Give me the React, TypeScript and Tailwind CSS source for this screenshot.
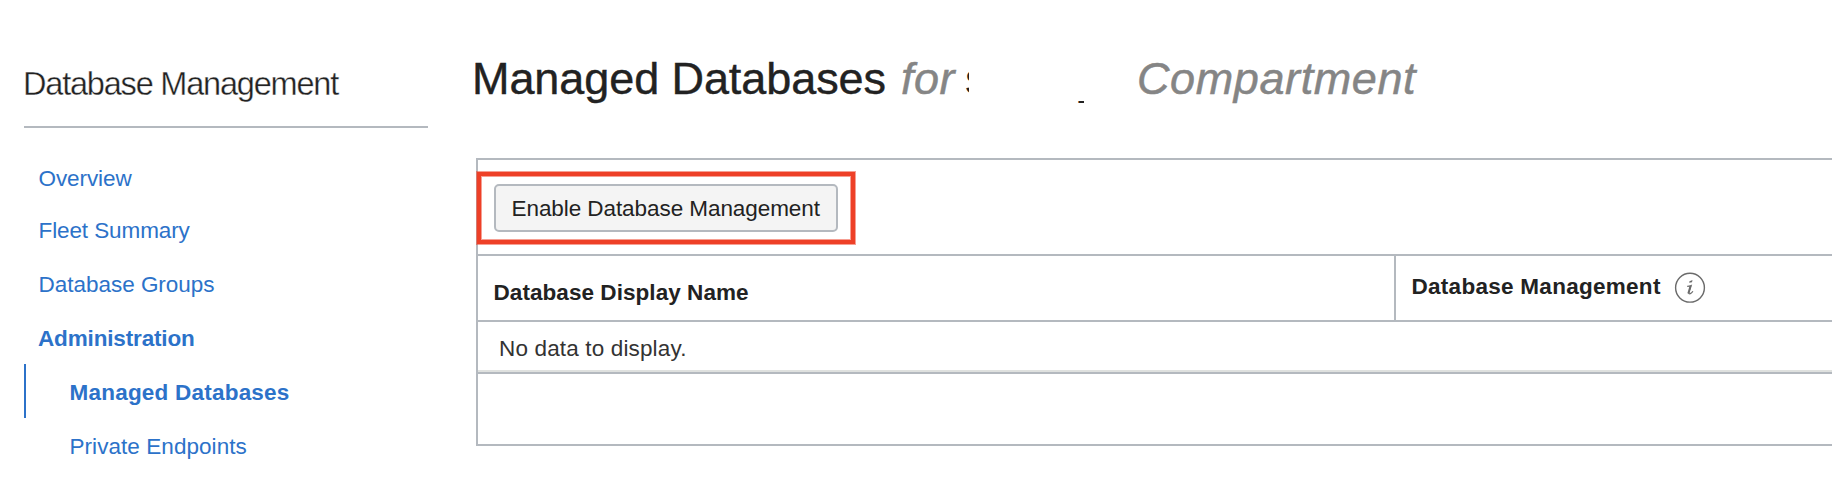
import React from "react";

type NavItem = { label: string; className: string };

const navItems: NavItem[] = [
  { label: "Overview", className: "h-[52px] pl-[14.5px] tracking-[-0.08px]" },
  { label: "Fleet Summary", className: "h-[54px] pl-[14.5px] tracking-[-0.1px]" },
  { label: "Database Groups", className: "h-[54px] pl-[14.5px] tracking-[-0.02px]" },
  { label: "Administration", className: "h-[54px] pl-[14px] font-bold tracking-[-0.15px]" },
  {
    label: "Managed Databases",
    className: "h-[54px] border-l-2 border-[#2c72c9] pl-[43.5px] font-bold tracking-[0.22px]",
  },
  { label: "Private Endpoints", className: "h-[54px] pl-[45.5px] tracking-[0.06px]" },
];

function InfoIcon() {
  return (
    <svg className="ml-[14px] mt-[16px] h-8 w-8 shrink-0" viewBox="0 0 32 32" fill="none">
      <circle cx="16" cy="15.7" r="14.4" stroke="#6b6b6b" strokeWidth="1.4" />
      <path d="M15.5 9.2L18.5 8.1L18 10.3L15.2 10.8Z" fill="#6b6b6b" />
      <path
        d="M13.2 14.3C14.6 14.3 16 14 17.2 13.5L14.9 20.6C14.6 22 15.5 22.1 16.4 21.6C17.6 21 18.3 20.2 18.9 19.2"
        stroke="#6b6b6b"
        strokeWidth="1.2"
      />
      <path d="M16.5 13.9L14.3 21.4" stroke="#6b6b6b" strokeWidth="1.9" />
    </svg>
  );
}

function Sidebar() {
  return (
    <aside className="w-[404px] shrink-0">
      <h2 className="-ml-px h-[126px] whitespace-nowrap pt-[61px] text-[32.5px] leading-[46px] tracking-[-1.2px] text-[#222] [-webkit-text-stroke:0.35px_white]">
        Database Management
      </h2>
      <div className="h-[2px] bg-[#b4b9bf]" />
      <nav className="pt-[22px] text-[22.5px] leading-[57px] text-[#2c72c9]">
        {navItems.map((item) => (
          <a key={item.label} className={`block whitespace-nowrap ${item.className}`}>
            {item.label}
          </a>
        ))}
      </nav>
    </aside>
  );
}

function Heading() {
  return (
    <h1 className="-ml-[4px] flex h-[158px] whitespace-nowrap pt-[50px] text-[45px] leading-[58px] text-[#222]">
      <span className="w-[429px] tracking-[-0.08px] [-webkit-text-stroke:0.4px_#222]">Managed Databases</span>
      <em className="w-[64px] tracking-[0.5px] text-[#858585] [-webkit-text-stroke:0.5px_#858585]">for</em>
      <span className="h-[58px] w-[4px] overflow-hidden">s</span>
      <span className="ml-[108px] mt-[51px] flex h-[2px] w-[7px] items-end overflow-hidden">
        <span className="-mb-[6px]">y</span>
      </span>
      <em className="ml-[53px] tracking-[0.6px] text-[#858585] [-webkit-text-stroke:0.5px_#858585]">Compartment</em>
    </h1>
  );
}

function DatabaseTable() {
  return (
    <section className="h-[288px] border-y-2 border-l-2 border-[#b4b9bf] text-[22.5px] text-[#222]">
      <div className="flex h-[96px] items-start border-b-2 border-[#b4b9bf] pt-[12px]">
        <div className="-ml-px h-[72px] w-[378px] border-4 border-[#ee4027] pl-[13px] pt-[8px] shadow-[0_0_0_1px_#ee402780,inset_0_0_0_1px_#ee402780]">
          <button className="h-[48px] w-[344px] whitespace-nowrap rounded-[5px] border-2 border-[#b4b9bf] bg-[#f4f4f4] pl-[15.5px] text-left leading-[46px] tracking-[-0.07px]">
            Enable Database Management
          </button>
        </div>
      </div>
      <div className="flex h-[66px] border-b-2 border-[#b4b9bf] font-bold">
        <div className="w-[918px] border-r-2 border-[#b4b9bf] pl-[15.5px] leading-[73px] tracking-[0.06px]">
          Database Display Name
        </div>
        <div className="flex pl-[15px] leading-[61px] tracking-[0.28px]">
          <span className="w-[249px] whitespace-nowrap pl-[0.5px]">Database Management</span>
          <InfoIcon />
        </div>
      </div>
      <div className="h-[50px] border-b-2 border-[#dfe1df] pl-[21px] leading-[53px] tracking-[0.15px] text-[#333]">
        No data to display.
      </div>
      <div className="h-[2px] bg-[#b4b9bf]" />
    </section>
  );
}

export default function App() {
  return (
    <div className="flex h-[486px] w-[1832px] overflow-hidden bg-white pl-[24px] font-['Liberation_Sans',Arial,sans-serif]">
      <Sidebar />
      <main className="ml-[48px] w-[1356px] shrink-0">
        <Heading />
        <DatabaseTable />
      </main>
    </div>
  );
}
